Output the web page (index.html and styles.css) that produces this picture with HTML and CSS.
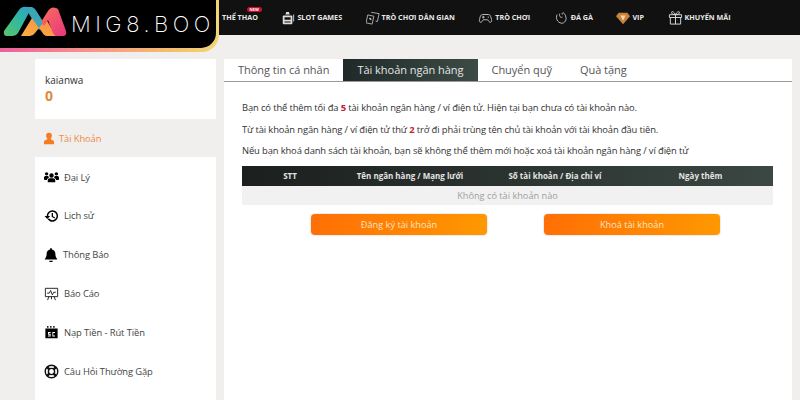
FILE: index.html
```html
<!DOCTYPE html>
<html lang="vi">
  <head>
    <meta charset="UTF-8" />
    <meta name="viewport" content="width=device-width, initial-scale=1.0" />
    <title>MIG8.BOO</title>
    <link rel="stylesheet" href="styles.css">
  </head>
  <body>
    <header class="topbar">
      <a class="logo">
        <span class="logo-inner">
          <svg class="logo-mark" viewBox="0 0 68 40" width="68" height="40">
            <defs>
              <linearGradient id="lg-a" x1="0" y1="1" x2="1" y2="0">
                <stop offset="0" stop-color="#5cc46a" />
                <stop offset="0.55" stop-color="#2fb8a0" />
                <stop offset="1" stop-color="#2f9fd0" />
              </linearGradient>
              <linearGradient id="lg-b" x1="0" y1="1" x2="1" y2="0">
                <stop offset="0" stop-color="#fbb040" />
                <stop offset="1" stop-color="#f78a4a" />
              </linearGradient>
              <linearGradient id="lg-c" x1="0" y1="0" x2="1" y2="1">
                <stop offset="0" stop-color="#f8705a" />
                <stop offset="1" stop-color="#e8357f" />
              </linearGradient>
            </defs>
            <path d="M4 31 19 10Q22 6 27 7H32L18 33Q16 36 12 36H7Q3 36 4 31Z" fill="url(#lg-a)" />
            <path d="M27 7H32Q35 8 37 12L44 23 39 30 29 14Z" fill="#3aa6b8" />
            <path d="M21 36 32 18 39 28 46 19 56 36H47Q44 36 42 32L39 28 35 33Q33 36 30 36Z" fill="url(#lg-b)" />
            <path d="M41 22 48 11Q51 6 56 8L58 9 66 31Q67 36 63 36H57Q54 36 52 31L48 20 44 26Z" fill="url(#lg-c)" />
          </svg>
          <span class="logo-text">MIG8.BOO</span>
        </span>
      </a>
      <nav class="nav">
        <a class="nav-item nav-first">Thể thao<span class="badge">NEW</span></a>
        <a class="nav-item">
          <svg viewBox="0 0 16 16" width="14" height="14"><path fill="#ddd" d="M3 5h9a1 1 0 0 1 1 1v8a1 1 0 0 1-1 1H3a1 1 0 0 1-1-1V6a1 1 0 0 1 1-1Zm1 2v3h7V7Zm0 5v1h7v-1ZM6 1h3l1 3H5ZM14 4h1v8h-1Z"/></svg>
          Slot games
        </a>
        <a class="nav-item">
          <svg viewBox="0 0 16 16" width="14" height="14" fill="none" stroke="#bbb"><path d="M6 1.500 15 3l-2 9-2-.4M2 4.500l7 1.500-2 9-7-1.500Z"/><path d="M4 8l2 2" stroke-width="2"/></svg>
          Trò chơi dân gian
        </a>
        <a class="nav-item">
          <svg viewBox="0 0 16 16" width="15" height="14" fill="none" stroke="#ccc"><path d="M4.500 4h7c2 0 3 3 3.500 7 0 2-2 2.500-3 1l-1.500-2h-5L4 12c-1 1.500-3 1-3-1 .5-4 1.500-7 3.500-7Z"/><path d="M4 7h3M5.500 5.500v3M10.500 7h1.500"/></svg>
          Trò chơi
        </a>
        <a class="nav-item">
          <svg viewBox="0 0 16 16" width="15" height="14" fill="none" stroke="#ccc"><path d="M3 4c-2 4 0 9 5 10 4 0 6-4 5-7-.5-2-1-4-3-5-1 0-1.500 1-1 2"/><path d="M6 3c-1 3 1 5 3 4"/></svg>
          Đá gà
        </a>
        <a class="nav-item">
          <svg viewBox="0 0 16 16" width="14" height="14"><path fill="#c9823a" d="M3 2h10l3 4-8 9-8-9Z"/><path fill="#f2d9a8" d="M5 5h6l-3 6Z"/></svg>
          VIP
        </a>
        <a class="nav-item">
          <svg viewBox="0 0 16 16" width="15" height="15" fill="none" stroke="#ddd"><path d="M1.500 5h13v3h-13ZM2.500 8v7h11V8M8 5v10M8 5C6 1 3 1 4 3.500 4.500 4.500 6 5 8 5Zm0 0c2-4 5-4 4-1.500C11.500 4.500 10 5 8 5Z"/></svg>
          Khuyến mãi
        </a>
      </nav>
    </header>

    <div class="page">
      <aside class="side">
        <div class="user-card">
          <div class="user-name">kaianwa</div>
          <div class="user-balance">0</div>
        </div>
        <ul class="menu">
          <li class="menu-item active">
            <svg viewBox="2 1 12 14" width="10" height="13"><path fill="#f47b20" d="M8 1a3.500 3.500 0 0 1 3.500 3.500c0 1.500-.7 3-1.500 3.600V9l2.500 1c1 .5 1.500 1 1.500 2v3H2v-3c0-1 .5-1.500 1.500-2L6 9v-.9C5.200 7.500 4.500 6 4.500 4.500A3.500 3.500 0 0 1 8 1Z"/></svg>
            <span>Tài Khoản</span>
          </li>
          <li class="menu-item">
            <svg viewBox="0 0 20 16" width="15" height="14"><path d="M10 3a3 3 0 1 1 0 6 3 3 0 0 1 0-6ZM3.500 1.500a2.300 2.300 0 1 1 0 4.600 2.300 2.300 0 0 1 0-4.600Zm13 0a2.300 2.300 0 1 1 0 4.600 2.300 2.300 0 0 1 0-4.600ZM5 15v-2.500C5 10.500 6.500 9.500 8 9.500h4c1.500 0 3 1 3 3V15ZM0 11V9c0-1.500 1-2.300 2.500-2.300h2c.5 0 1 .1 1.400.4A4 4 0 0 0 6.600 9.300C5 9.800 4 10.700 3.900 12H1a1 1 0 0 1-1-1Zm20 0V9c0-1.500-1-2.300-2.500-2.300h-2c-.5 0-1 .1-1.400.4a4 4 0 0 1-.7 2.200C15 9.800 16 10.700 16.100 12H19a1 1 0 0 0 1-1Z"/></svg>
            <span>Đại Lý</span>
          </li>
          <li class="menu-item">
            <svg viewBox="0 0 16 16" width="15" height="14"><path d="M9 1.500a6.500 6.500 0 1 1-5.300 10.300l1.300-1.100A4.800 4.800 0 1 0 4.200 8H6.500L3.200 11.500 0 8h2.500A6.500 6.500 0 0 1 9 1.500ZM8.200 4.500h1.500v3.700l2.500 1.500-.8 1.200-3.200-2Z"/></svg>
            <span>Lịch sử</span>
          </li>
          <li class="menu-item">
            <svg viewBox="0 0 16 16" width="14" height="14"><path d="M8 0a1 1 0 0 1 1 1v.7c2.500.4 4 2.500 4 5 0 3.300 1 4.500 2 5.800v.5H1v-.5C2 11.200 3 10 3 6.700c0-2.500 1.500-4.600 4-5V1a1 1 0 0 1 1-1ZM6 14.500h4a2 2 0 0 1-4 0Z"/></svg>
            <span>Thông Báo</span>
          </li>
          <li class="menu-item">
            <svg viewBox="0 0 16 16" width="15" height="14" fill="none" stroke="#111"><path d="M1 1.500h14v9.500H1Z"/><path d="M3 7h2.500l1.500-3 2 5 1.500-3H13M5 11l-1.500 4M11 11l1.500 4M8 11v3"/></svg>
            <span>Báo Cáo</span>
          </li>
          <li class="menu-item">
            <svg viewBox="0 0 16 16" width="15" height="14"><path d="M1 4h14v11H1Zm2-3h1.500v2H3Zm3.500 0H8v2H6.500Zm3.500 0h1.500v2H10Z"/><path fill="#fff" d="M4 8h3v1H5v1h2v3H4v-1h2v-1H4Zm5 0h3v1h-2v3h2v1H9Z"/></svg>
            <span>Nạp Tiền - Rút Tiền</span>
          </li>
          <li class="menu-item">
            <svg viewBox="0 0 16 16" width="15" height="15" fill="none" stroke="#111"><circle cx="8" cy="8" r="6.700" stroke-width="1.500"/><circle cx="8" cy="8" r="3.300" stroke-width="1.500"/><path stroke-width="2.600" d="M3.300 3.300 5.700 5.700M12.700 3.300 10.300 5.700M3.300 12.700 5.700 10.300M12.700 12.700 10.300 10.300"/></svg>
            <span>Câu Hỏi Thường Gặp</span>
          </li>
        </ul>
      </aside>

      <main class="content">
        <div class="tabs">
          <a class="tab">Thông tin cá nhân</a>
          <a class="tab active">Tài khoản ngân hàng</a>
          <a class="tab">Chuyển quỹ</a>
          <a class="tab">Quà tặng</a>
        </div>
        <div class="panel">
          <p>Bạn có thể thêm tối đa <b>5</b> tài khoản ngân hàng / ví điện tử. Hiện tại bạn chưa có tài khoản nào.</p>
          <p>Từ tài khoản ngân hàng / ví điện tử thứ <b>2</b> trở đi phải trùng tên chủ tài khoản với tài khoản đầu tiên.</p>
          <p>Nếu bạn khoá danh sách tài khoản, bạn sẽ không thể thêm mới hoặc xoá tài khoản ngân hàng / ví điện tử</p>
          <div class="table">
            <div class="table-head">
              <span>STT</span>
              <span>Tên ngân hàng / Mạng lưới</span>
              <span>Số tài khoản / Địa chỉ ví</span>
              <span>Ngày thêm</span>
            </div>
            <div class="table-empty">Không có tài khoản nào</div>
          </div>
          <div class="actions">
            <button class="btn">Đăng ký tài khoản</button>
            <button class="btn">Khoá tài khoản</button>
          </div>
        </div>
      </main>
    </div>
  </body>
</html>
```

FILE: styles.css
```css
body {
  margin: 0;
  height: 400px;
  overflow: hidden;
  background: #f1efed;
  font-family: "Open Sans", "Noto Sans", sans-serif;
  color: #333;
}

.topbar {
  position: relative;
  height: 35px;
  background: #111;
}

.logo {
  position: absolute;
  top: 0;
  left: 0;
  width: 219px;
  height: 52px;
  border-radius: 0 0 17px 0;
  background: linear-gradient(90deg, #ee5f9c, #f59a86 45%, #f4c06c 80%, #f0d679);
}

.logo-inner {
  display: flex;
  align-items: flex-start;
  width: 216px;
  height: 48px;
  border-radius: 0 0 15px 0;
  background: #000;
}

.logo-mark {
  flex: none;
}

.logo-text {
  margin: 9px 0 0 3px;
  font-family: "Inter", sans-serif;
  font-size: 22px;
  font-weight: 200;
  line-height: 30px;
  letter-spacing: 4.500px;
  color: #fff;
}

.nav {
  display: flex;
  align-items: center;
  gap: 23.500px;
  height: 35px;
  padding-left: 222px;
}

.nav-item {
  display: flex;
  align-items: center;
  gap: 2px;
  font-size: 7.200px;
  font-weight: 700;
  line-height: 35px;
  text-transform: uppercase;
  white-space: nowrap;
  color: #e8e8e8;
}

.nav-first {
  position: relative;
}

.badge {
  position: absolute;
  top: 7px;
  right: -4px;
  padding: 0 3px;
  border-radius: 4px;
  background: #c8102e;
  font-size: 4px;
  line-height: 5px;
  color: #fff;
}

.page {
  display: flex;
  gap: 8px;
  padding: 24px 8px 0 35px;
}

.side {
  flex: none;
  width: 181px;
}

.user-card {
  height: 60px;
  box-sizing: border-box;
  padding: 13px 10px 0;
  background: #fff;
}

.user-name {
  font-size: 10px;
  line-height: 16px;
}

.user-balance {
  font-size: 14px;
  font-weight: 700;
  line-height: 16px;
  color: #e08a3c;
}

.menu {
  margin: 0;
  padding: 0;
  list-style: none;
  background: linear-gradient(#f1efed 38px, #fff 38px);
  height: 290px;
}

.menu-item {
  display: flex;
  align-items: center;
  gap: 5px;
  height: 38.800px;
  padding-left: 9px;
  font-size: 9.400px;
  letter-spacing: -0.100px;
  color: #444;
}

.menu-item svg {
  flex: none;
}

.menu-item.active {
  color: #f08a42;
}

.content {
  flex: 1;
  height: 341px;
  background: #fff;
}

.tabs {
  display: flex;
  height: 22px;
  border-bottom: 1px solid #999;
}

.tab {
  padding: 0 14px;
  font-size: 11px;
  letter-spacing: -0.030px;
  line-height: 22px;
  color: #555;
}

.tab.active {
  background: linear-gradient(90deg, #1f2a28, #3d4b46);
  color: #e6e6e6;
}

.panel {
  padding: 15px 19px 0 18px;
}

.panel p {
  margin: 0;
  font-size: 9.400px;
  letter-spacing: -0.120px;
  line-height: 21.500px;
  color: #333;
  white-space: nowrap;
}

.panel b {
  color: #c8202f;
}

.table {
  margin-top: 4px;
}

.table-head {
  display: grid;
  grid-template-columns: 96px 144px 146px 1fr;
  height: 20px;
  background: linear-gradient(90deg, #1b1f1e, #3b4742);
  font-size: 8px;
  font-weight: 700;
  line-height: 20px;
  text-align: center;
  color: #e4e4e4;
}

.table-empty {
  height: 19px;
  background: #f1f1f1;
  font-size: 9.200px;
  line-height: 19px;
  text-align: center;
  color: #a0a0a0;
}

.actions {
  display: flex;
  justify-content: center;
  gap: 57px;
  margin-top: 9px;
  padding-left: 16px;
}

.btn {
  width: 176px;
  height: 21px;
  padding: 0;
  border: 0;
  border-radius: 4px;
  background: linear-gradient(90deg, #ff6f06, #ff9800);
  box-shadow: 0 0 2px rgba(0, 0, 0, 0.25);
  font-family: inherit;
  font-size: 9.200px;
  color: #fbe3c4;
}
```
